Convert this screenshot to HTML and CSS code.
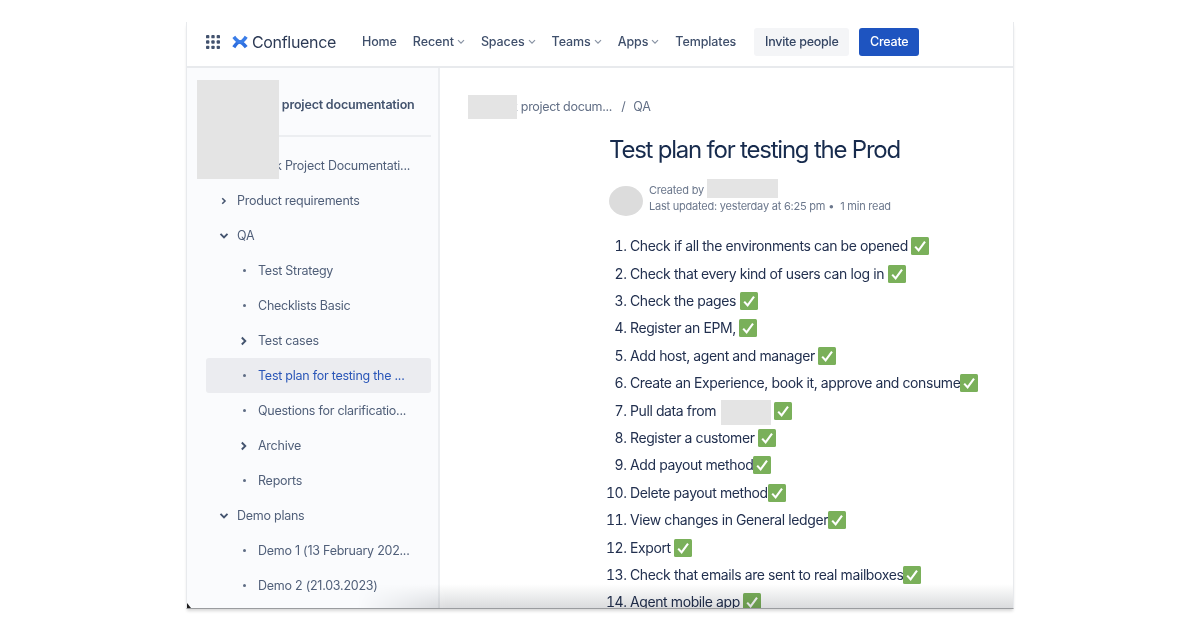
FILE: index.html
```html
<!DOCTYPE html>
<html lang="en">
<head>
<meta charset="utf-8">
<title>Test plan for testing the Prod</title>
<link rel="stylesheet" href="styles.css">
</head>
<body>
<svg class="defs" width="0" height="0" aria-hidden="true">
  <symbol id="tick" viewBox="0 0 18 18">
    <rect width="18" height="18" rx="1.5" fill="#7ab05a"/>
    <path d="M4.2 9.6 7.6 13.4 14 4.6" fill="none" stroke="#fff" stroke-width="2.1"/>
  </symbol>
  <symbol id="down" viewBox="0 0 8 6"><path d="M1 1.200 4 4.200 7 1.200" fill="none" stroke="currentColor" stroke-width="1.2"/></symbol>
  <symbol id="tdown" viewBox="0 0 10 8"><path d="M1.500 1.800 5 5.300 8.500 1.800" fill="none" stroke="currentColor" stroke-width="1.9"/></symbol>
  <symbol id="tright" viewBox="0 0 8 10"><path d="M1.800 1.500 5.300 5 1.800 8.500" fill="none" stroke="currentColor" stroke-width="1.9"/></symbol>
</svg>
<div class="frame">
  <header class="topbar">
    <svg class="apps" viewBox="0 0 15 15" aria-hidden="true">
      <g fill="#42526e">
        <rect x="0" y="0" width="3.600" height="3.600" rx="1"/><rect x="5.700" y="0" width="3.600" height="3.600" rx="1"/><rect x="11.400" y="0" width="3.600" height="3.600" rx="1"/>
        <rect x="0" y="5.700" width="3.600" height="3.600" rx="1"/><rect x="5.700" y="5.700" width="3.600" height="3.600" rx="1"/><rect x="11.400" y="5.700" width="3.600" height="3.600" rx="1"/>
        <rect x="0" y="11.400" width="3.600" height="3.600" rx="1"/><rect x="5.700" y="11.400" width="3.600" height="3.600" rx="1"/><rect x="11.400" y="11.400" width="3.600" height="3.600" rx="1"/>
      </g>
    </svg>
    <svg class="logo" viewBox="0 0 16 14" aria-hidden="true">
      <g fill="none" stroke-width="3.600">
        <path d="M1.800 12.200C4.200 8.600 6 6.700 8 7c2 .3 4 2.400 6.200 5.200" stroke="#2f6fdf"/>
        <path d="M1.800 1.800C4 4.600 6 6.700 8 7c2 .3 3.800-1.600 6.200-5.200" stroke="#3a7de8"/>
      </g>
    </svg>
    <span class="brand">Confluence</span>
    <nav class="nav">
      <a class="nav-item">Home</a>
      <a class="nav-item">Recent<svg class="caret"><use href="#down"/></svg></a>
      <a class="nav-item">Spaces<svg class="caret"><use href="#down"/></svg></a>
      <a class="nav-item">Teams<svg class="caret"><use href="#down"/></svg></a>
      <a class="nav-item">Apps<svg class="caret"><use href="#down"/></svg></a>
      <a class="nav-item">Templates</a>
    </nav>
    <button class="btn btn-light">Invite people</button>
    <button class="btn btn-primary">Create</button>
  </header>
  <div class="body">
    <aside class="sidebar">
      <div class="space-name">k project documentation</div>
      <div class="tree">
        <div class="row root"><span class="label">k Project Documentati...</span></div>
        <div class="row l1"><svg class="tw"><use href="#tright"/></svg><span class="label">Product requirements</span></div>
        <div class="row l1"><svg class="tw"><use href="#tdown"/></svg><span class="label">QA</span></div>
        <div class="row l2"><i class="dot"></i><span class="label">Test Strategy</span></div>
        <div class="row l2"><i class="dot"></i><span class="label">Checklists Basic</span></div>
        <div class="row l2"><svg class="tw"><use href="#tright"/></svg><span class="label">Test cases</span></div>
        <div class="row l2 active"><i class="dot"></i><span class="label">Test plan for testing the ...</span></div>
        <div class="row l2"><i class="dot"></i><span class="label">Questions for clarificatio...</span></div>
        <div class="row l2"><svg class="tw"><use href="#tright"/></svg><span class="label">Archive</span></div>
        <div class="row l2"><i class="dot"></i><span class="label">Reports</span></div>
        <div class="row l1"><svg class="tw"><use href="#tdown"/></svg><span class="label">Demo plans</span></div>
        <div class="row l2"><i class="dot"></i><span class="label">Demo 1 (13 February 202...</span></div>
        <div class="row l2"><i class="dot"></i><span class="label">Demo 2 (21.03.2023)</span></div>
      </div>
    </aside>
    <main class="content">
      <div class="crumbs"><span class="crumb-a">k project docum...</span><span class="sep">/</span><span>QA</span></div>
      <article class="article">
        <h1 class="title">Test plan for testing the Prod</h1>
        <div class="byline">
          <div class="avatar"></div>
          <div class="meta">
            <div>Created by</div>
            <div>Last updated: yesterday at 6:25 pm<span class="bullet">•</span>1 min read</div>
          </div>
        </div>
        <ol class="steps">
          <li>Check if all the environments can be opened <svg class="tick"><use href="#tick"/></svg></li>
          <li>Check that every kind of users can log in <svg class="tick"><use href="#tick"/></svg></li>
          <li>Check the pages <svg class="tick"><use href="#tick"/></svg></li>
          <li>Register an EPM, <svg class="tick"><use href="#tick"/></svg></li>
          <li>Add host, agent and manager <svg class="tick"><use href="#tick"/></svg></li>
          <li>Create an Experience, book it, approve and consume<svg class="tick"><use href="#tick"/></svg></li>
          <li>Pull data from <span class="gap"></span><svg class="tick"><use href="#tick"/></svg></li>
          <li>Register a customer <svg class="tick"><use href="#tick"/></svg></li>
          <li>Add payout method<svg class="tick"><use href="#tick"/></svg></li>
          <li>Delete payout method<svg class="tick"><use href="#tick"/></svg></li>
          <li>View changes in General ledger<svg class="tick"><use href="#tick"/></svg></li>
          <li>Export <svg class="tick"><use href="#tick"/></svg></li>
          <li>Check that emails are sent to real mailboxes<svg class="tick"><use href="#tick"/></svg></li>
          <li>Agent mobile app <svg class="tick"><use href="#tick"/></svg></li>
        </ol>
      </article>
    </main>
  </div>
  <div class="fade"></div>
  <div class="notch"></div>
  <div class="blur blur-side"></div>
  <div class="blur blur-crumb"></div>
  <div class="blur blur-author"></div>
  <div class="blur blur-data"></div>
</div>
</body>
</html>
```
FILE: styles.css
```css
* { box-sizing: border-box; }
html, body { margin: 0; height: 100%; background: #fff; overflow: hidden; }
body { font-family: Inter, "Liberation Sans", sans-serif; color: #172b4d; }
.defs { position: absolute; }

.frame {
  position: relative;
  width: 828px;
  height: 587px;
  margin: 22px 0 0 186px;
  background: #fff;
  overflow: hidden;
  border-left: 1px solid #e8eaed;
  border-right: 1px solid #e8eaed;
  border-bottom: 1px solid #9a9c9f;
  box-shadow: 0 3px 3px -1px rgba(0,0,0,.16);
}

.topbar {
  display: flex;
  align-items: center;
  height: 46px;
  padding: 0 0 5px 19px;
  border-bottom: 2px solid #e8eaed;
}
.apps { width: 14px; height: 14px; margin-right: 12px; }
.logo { width: 16px; height: 14px; margin-right: 4px; }
.brand { font-size: 16px; color: #2c3a55; margin-right: 26px; letter-spacing: -.33px; }
.nav { display: flex; gap: 16px; margin-right: 18px; }
.nav-item { display: flex; align-items: center; font-size: 12.500px; font-weight: 500; letter-spacing: -.1px; color: #3f4f6b; }
.caret { width: 8px; height: 6px; margin-left: 3px; color: #8993a4; }
.btn { height: 28px; border: 0; border-radius: 3px; font: 500 12.500px Inter, "Liberation Sans", sans-serif; letter-spacing: -.25px; }
.btn-light { width: 95px; margin-right: 10px; background: #f4f5f7; color: #344563; }
.btn-primary { width: 60px; background: #1e54c0; color: #fff; }

.body { display: flex; height: 541px; }

.sidebar {
  flex: 0 0 253px;
  padding: 0 7px 0 11px;
  background: #fafbfd;
  border-right: 2px solid #eceef1;
}
.space-name {
  height: 69px;
  padding: 29px 0 0 74px;
  border-bottom: 2px solid #eceef1;
  font-size: 12.500px;
  font-weight: 600;
  letter-spacing: -.2px;
  color: #44546f;
  white-space: nowrap;
}
.tree { padding-top: 11px; }
.row {
  display: flex;
  align-items: center;
  height: 35px;
  font-size: 12.500px;
  letter-spacing: -.25px;
  color: #505f79;
  white-space: nowrap;
  border-radius: 3px;
  margin-left: 8px;
}
.root { padding-left: 69px; }
.l1 { padding-left: 13px; }
.l2 { padding-left: 34px; }
.tw { width: 8px; height: 10px; margin-right: 10px; color: #44546f; flex: none; }
.l1 .tw { width: 10px; height: 8px; margin-right: 8px; }
.dot { width: 3px; height: 3px; margin: 0 12px 0 3px; border-radius: 50%; background: #5e6c84; flex: none; }
.active { background: #ebecf0; color: #2a56b8; }

.content { flex: 1; padding: 30px 0 0 28px; position: relative; }
.crumbs { display: flex; font-size: 12.500px; letter-spacing: -.3px; line-height: 18px; color: #626f86; white-space: nowrap; }
.crumb-a { margin-right: 9px; padding-left: 43px; }
.sep { margin-right: 8px; }
.article { padding: 0 0 0 141px; margin-top: 17px; }
.title { margin: 0; font-size: 24px; font-weight: 400; line-height: 34px; letter-spacing: -1.22px; color: #172b4d; white-space: nowrap; }
.byline { display: flex; align-items: flex-start; gap: 6px; margin-top: 15px; }
.avatar { width: 34px; height: 30px; margin-top: 4px; border-radius: 50%; background: #dcdcdc; filter: blur(.5px); }
.meta { font-size: 11px; line-height: 16px; letter-spacing: -.22px; color: #6b778c; white-space: nowrap; }
.bullet { margin: 0 6px 0 3px; }

.steps {
  margin: 16.200px 0 0;
  padding: 0 0 0 21px;
  font-size: 14px;
  letter-spacing: -.4px;
  line-height: 27.400px;
  color: #22304f;
  white-space: nowrap;
}
.tick { width: 18px; height: 18px; vertical-align: -4px; }
.gap { display: inline-block; width: 54px; }

.fade {
  position: absolute;
  left: 170px;
  right: 0;
  bottom: 0;
  height: 24px;
  background: linear-gradient(to bottom, #fff, #dadbdd);
  mix-blend-mode: multiply;
  mask-image: linear-gradient(to right, transparent, #000 90px);
}
.notch {
  position: absolute;
  left: 0;
  bottom: 0;
  border-left: 4px solid #1c1c1c;
  border-top: 5px solid transparent;
}
.blur { position: absolute; background: #e4e4e4; filter: blur(.6px); }
.blur-side { left: 10px; top: 58px; width: 82px; height: 99px; }
.blur-crumb { left: 281px; top: 73px; width: 49px; height: 24px; }
.blur-author { left: 520px; top: 157px; width: 71px; height: 19px; }
.blur-data { left: 534px; top: 378px; width: 50px; height: 25px; }
```
